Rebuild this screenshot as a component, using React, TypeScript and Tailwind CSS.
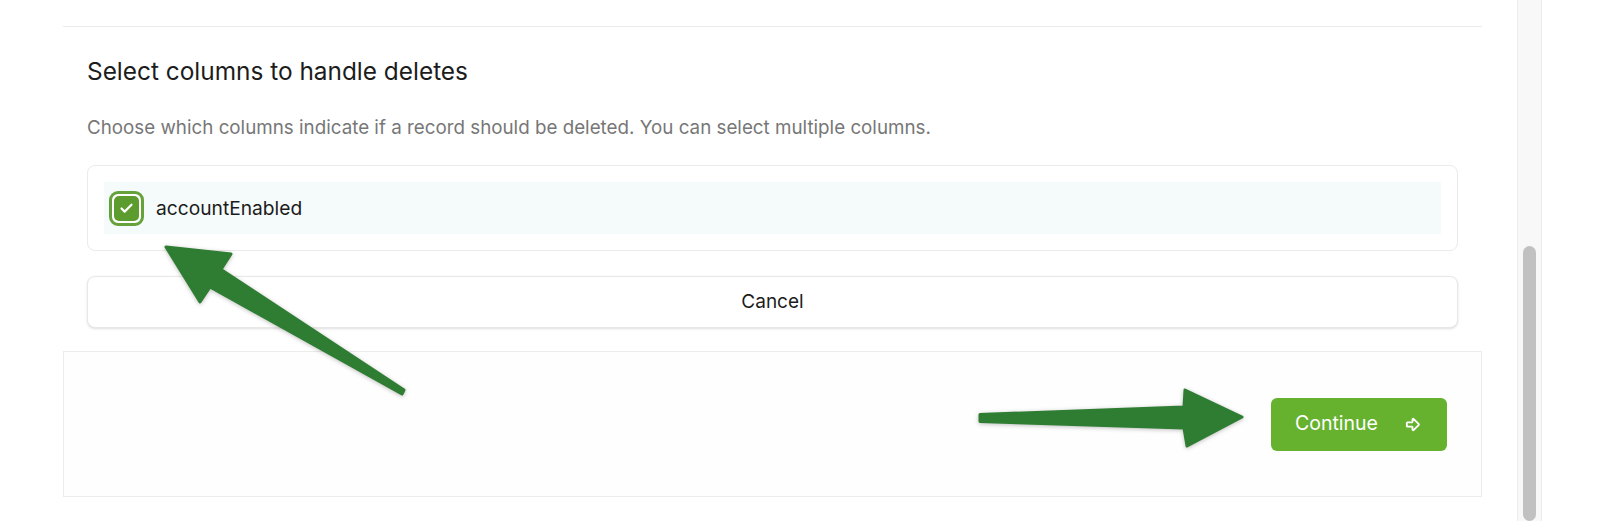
import { ArrowBigRight, Check } from "lucide-react";

export default function App() {
  return (
    <div className="relative h-[521px] w-full overflow-hidden bg-white font-['Inter',sans-serif]">
      <div className="flex h-full">
        <main className="flex-1 pl-[63px] pr-[35px]">
          <div className="h-[27px] border-b border-[#ececec]" />
          <section className="px-6">
            <h2 className="mt-[30px] text-[24.4px] leading-[28px] text-[#1c1c1c]">
              Select columns to handle deletes
            </h2>
            <p className="mt-[31px] text-[18.8px] leading-6 text-[#777777]">
              Choose which columns indicate if a record should be deleted. You
              can select multiple columns.
            </p>
            <ColumnList />
            <button className="mt-[25px] h-[52px] w-full rounded-lg border border-[#e8e8e8] bg-white text-[19px] text-[#1c1c1c] shadow-sm">
              Cancel
            </button>
          </section>
          <Footer />
        </main>
        <Scrollbar />
        <div className="w-[58px]" />
      </div>
      <Arrows />
    </div>
  );
}

const ColumnList = () => (
  <div className="mt-[25px] rounded-lg border border-[#ebebeb] p-4">
    <label className="flex h-[52px] items-center gap-3 bg-[#f5fafa] pl-[5px]">
      <span className="flex h-[35px] w-[35px] items-center justify-center rounded-[9px] border-[3px] border-[#66a23c] bg-white p-[2px]">
        <span className="flex h-full w-full items-center justify-center rounded-[5px] bg-[#5c9b2e]">
          <Check size={15} strokeWidth={3.5} className="text-white" />
        </span>
      </span>
      <span className="text-[19.2px] text-[#1c1c1c]">accountEnabled</span>
    </label>
  </div>
);

const Footer = () => (
  <footer className="mt-[23px] flex h-[146px] items-center justify-end border border-[#ececec] bg-[#fefefe] pr-[34px]">
    <button className="flex h-[53px] w-[176px] items-center justify-between rounded-md bg-[#66b22f] pl-6 pr-[26px] text-[19.5px] text-white">
      Continue
      <ArrowBigRight size={17} strokeWidth={2.6} />
    </button>
  </footer>
);

const Scrollbar = () => (
  <div className="w-[25px] border-x border-[#ececec] bg-[#f8f8f8] px-[5px] pt-[246px]">
    <div className="h-full rounded-full bg-[#c1c1c1]" />
  </div>
);

// annotation arrows drawn over the page
const Arrows = () => (
  <svg
    className="pointer-events-none absolute inset-0 drop-shadow-[0_1px_2px_rgba(0,0,0,0.25)]"
    width="1600"
    height="521"
    viewBox="0 0 1600 521"
  >
    <polygon
      points="166,247 231,254 221,269.5 404,390 402,394 210,287 200,302"
      fill="#2e7d32"
      stroke="#2e7d32"
      strokeWidth="3"
      strokeLinejoin="round"
    />
    <polygon
      points="980,414.5 1184,407 1185,390 1242,417 1187,446 1184,428 980,421.5"
      fill="#2e7d32"
      stroke="#2e7d32"
      strokeWidth="3"
      strokeLinejoin="round"
    />
  </svg>
);
